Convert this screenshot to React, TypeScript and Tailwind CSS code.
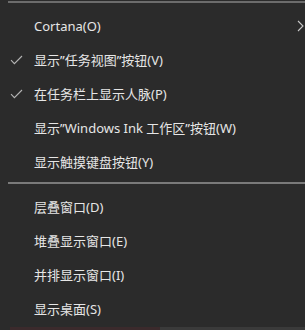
import React from "react";

const Check = () => (
  <svg width="13" height="10" viewBox="0 0 13 10" fill="none">
    <path d="M1 5.2 L4.4 8.6 L12 1" stroke="#b4b4b4" strokeWidth="1.1" />
  </svg>
);

const Chevron = () => (
  <svg width="7" height="12" viewBox="0 0 7 12" fill="none">
    <path d="M1 1 L6 6 L1 11" stroke="#c8c8c8" strokeWidth="1.1" />
  </svg>
);

type Item = { label: string; checked?: boolean; sub?: boolean };

const Row = ({ label, checked, sub }: Item) => (
  <div className="flex h-[34px] items-center">
    <div className="flex w-[34px] justify-center pr-[2px]">{checked ? <Check /> : null}</div>
    <span className="flex-1 text-[13px] leading-none text-[#e6e6e6]">{label}</span>
    {sub ? (
      <div className="flex w-[8px] justify-start">
        <Chevron />
      </div>
    ) : null}
  </div>
);

export default function App() {
  const top: Item[] = [
    { label: "Cortana(O)", sub: true },
    { label: "显示\u201D任务视图\u201D按钮(V)", checked: true },
    { label: "在任务栏上显示人脉(P)", checked: true },
    { label: "显示\u201DWindows Ink 工作区\u201D按钮(W)" },
    { label: "显示触摸键盘按钮(Y)" },
  ];
  const bottom: Item[] = [
    { label: "层叠窗口(D)" },
    { label: "堆叠显示窗口(E)" },
    { label: "并排显示窗口(I)" },
    { label: "显示桌面(S)" },
  ];
  return (
    <div
      className="flex h-[330px] w-[305px] flex-col overflow-hidden bg-[#2b2b2b]"
      style={{ fontFamily: '"Noto Sans", "Noto Sans CJK SC", sans-serif' }}
    >
      <div className="mt-[1px] ml-[8px] h-[2px] bg-[#6c6c6c]" />
      <div className="h-[6px]" />
      {top.map((it) => (
        <Row key={it.label} {...it} />
      ))}
      <div className="mt-[3px] mb-[6px] ml-[8px] h-[2px] bg-[#7a7a7a]" />
      {bottom.map((it) => (
        <Row key={it.label} {...it} />
      ))}
      <div className="mt-auto flex h-[3px]">
        <div className="w-[10px] bg-[#2b2b2b]" />
        <div className="w-[150px] bg-[#3b2a2c]" />
        <div className="flex-1 bg-[#3a3a3a]" />
      </div>
    </div>
  );
}
